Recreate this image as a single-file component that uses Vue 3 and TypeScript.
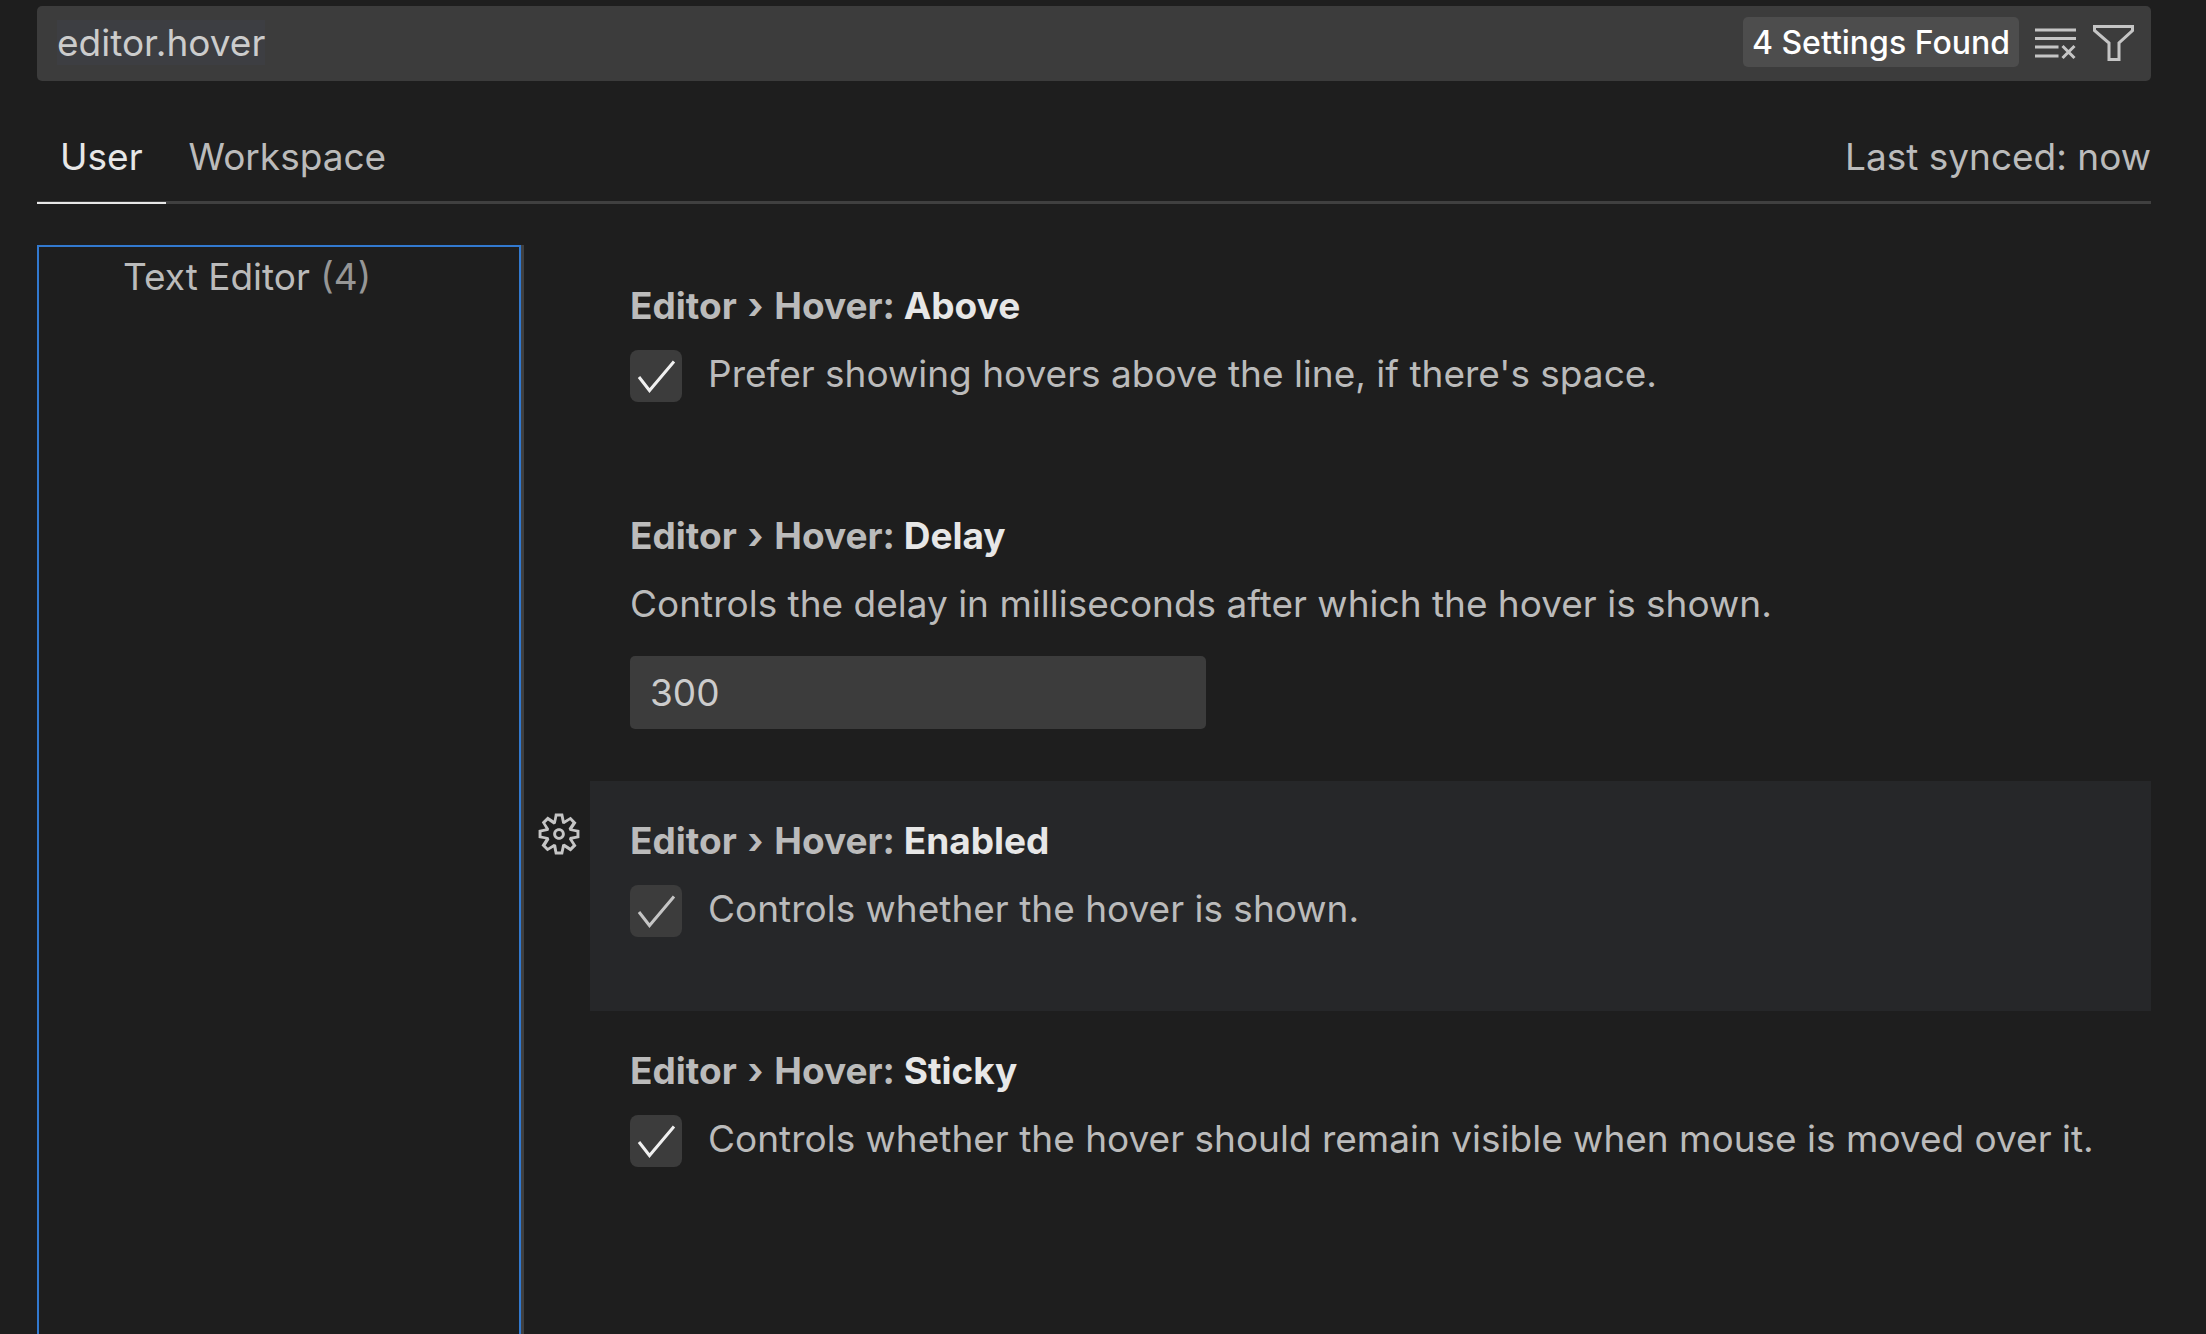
<script setup lang="ts">
import { onMounted, ref } from 'vue'

interface Setting {
  id: string
  name: string
  description: string
  kind: 'toggle' | 'number'
}

const settings: Setting[] = [
  { id: 'above', name: 'Above', description: "Prefer showing hovers above the line, if there's space.", kind: 'toggle' },
  { id: 'delay', name: 'Delay', description: 'Controls the delay in milliseconds after which the hover is shown.', kind: 'number' },
  { id: 'enabled', name: 'Enabled', description: 'Controls whether the hover is shown.', kind: 'toggle' },
  { id: 'sticky', name: 'Sticky', description: 'Controls whether the hover should remain visible when mouse is moved over it.', kind: 'toggle' },
]

const query = ref('editor.hover')
const delay = ref('300')
const toggles = ref<Record<string, boolean>>({ above: true, enabled: true, sticky: true })
const focusedId = ref('enabled')
const activeTab = ref('User')
const searchBox = ref<HTMLInputElement | null>(null)

onMounted(() => {
  searchBox.value?.select()
})
</script>

<template>
  <main class="settings-editor">
    <div class="search">
      <input ref="searchBox" v-model="query" class="search-input" type="text" aria-label="Search settings" spellcheck="false" />
      <span class="badge">4 Settings Found</span>
      <button class="icon-button" type="button" aria-label="Clear settings search">
        <svg viewBox="0 0 42 42" fill="none" stroke="currentColor" stroke-width="3">
          <path d="M0 9H41M0 17.500H41M0 26H23.500M0 35H23.500M27.500 25L39.500 37M39.500 25L27.500 37" />
        </svg>
      </button>
      <button class="icon-button" type="button" aria-label="Filter settings">
        <svg viewBox="0 0 42 42" fill="none" stroke="currentColor" stroke-width="3">
          <path d="M1.500 5.500H39.500V9.500L26 22V38.500H16V22L1.500 9.500Z" />
        </svg>
      </button>
    </div>

    <header class="tabs">
      <button
        v-for="tab in ['User', 'Workspace']"
        :key="tab"
        type="button"
        class="tab"
        :class="{ active: tab === activeTab }"
        @click="activeTab = tab"
      >{{ tab }}</button>
      <span class="sync">Last synced: now</span>
    </header>

    <div class="body">
      <nav class="toc" aria-label="Settings groups">
        <a href="#text-editor">Text Editor <span class="count">(4)</span></a>
      </nav>
      <section id="text-editor" class="list">
        <article
          v-for="item in settings"
          :key="item.id"
          class="row"
          :class="{ focused: item.id === focusedId }"
        >
          <div class="gutter">
            <button v-if="item.id === focusedId" class="icon-button" type="button" aria-label="More actions">
              <svg viewBox="0.8 0.8 14.4 14.4" fill="currentColor">
                <path fill-rule="evenodd" clip-rule="evenodd" d="M9.1 4.4L8.6 2H7.4l-.5 2.400-.7.3-2-1.300-.9.8 1.300 2-.2.700-2.400.500v1.200l2.400.500.3.8-1.300 2 .8.800 2-1.300.8.300.4 2.300h1.200l.5-2.400.8-.3 2 1.300.8-.8-1.300-2 .3-.8 2.300-.4V7.400l-2.400-.5-.3-.8 1.300-2-.8-.8-2 1.300-.7-.2zM9.400 1l.5 2.400L12 2.100l2 2-1.400 2.100 2.400.4v2.800l-2.400.5L14 12l-2 2-2.100-1.400-.5 2.400H6.600l-.5-2.400L4 13.900l-2-2 1.400-2.100L1 9.400V6.600l2.400-.5L2.100 4l2-2 2.100 1.400.4-2.400h2.800zm.6 7c0 1.100-.9 2-2 2s-2-.9-2-2 .9-2 2-2 2 .9 2 2zM8 9c.6 0 1-.4 1-1s-.4-1-1-1-1 .4-1 1 .4 1 1 1z" />
              </svg>
            </button>
          </div>
          <div class="content">
            <h2 class="title">Editor <span class="separator">›</span> Hover: <span class="name">{{ item.name }}</span></h2>
            <label v-if="item.kind === 'toggle'" class="toggle">
              <span class="box">
                <input v-model="toggles[item.id]" type="checkbox" />
                <svg v-if="toggles[item.id]" viewBox="0 0 52 52" fill="none" stroke="currentColor" stroke-width="3">
                  <path d="M9 27L19.500 40.500L44 11.500" />
                </svg>
              </span>
              <span>{{ item.description }}</span>
            </label>
            <template v-else>
              <label class="description" :for="item.id">{{ item.description }}</label>
              <input :id="item.id" v-model="delay" class="number" type="text" inputmode="numeric" />
            </template>
          </div>
        </article>
      </section>
    </div>
  </main>
</template>

<style>
body {
  background: #1e1e1e;
}
</style>

<style scoped>
.settings-editor {
  display: flex;
  flex-direction: column;
  box-sizing: border-box;
  min-height: 100vh;
  padding: 6px 55px 0 37px;
  background: #1e1e1e;
  color: #bbbbbb;
  font-family: Inter, "Liberation Sans", sans-serif;
  font-size: 37px;
  line-height: 48px;
}

button,
input {
  font: inherit;
  color: inherit;
}

button {
  padding: 0;
  border: 0;
  background: none;
}

input {
  box-sizing: border-box;
  min-width: 0;
  border: 0;
  outline: 0;
}

.search {
  display: flex;
  align-items: center;
  padding: 0 16px 3px 0;
  border-radius: 5px;
  background: #3c3c3c;
  color: #cccccc;
}

.search-input {
  flex: 1;
  height: 72px;
  padding: 0 20px;
  background: none;
}

.search-input::selection {
  background: #3d3e42;
  color: #cccccc;
}

.badge {
  margin-right: 16px;
  padding: 2px 9px 0;
  border-radius: 5px;
  background: #4d4d4d;
  color: #ffffff;
  font-size: 32px;
  font-weight: 500;
  line-height: 48px;
}

.icon-button {
  display: block;
  width: 42px;
  height: 42px;
  color: #c5c5c5;
}

.icon-button svg {
  display: block;
}

.search .icon-button + .icon-button {
  margin-left: 16px;
}

.tabs {
  display: flex;
  height: 72px;
  margin-top: 48px;
  border-bottom: 3px solid #404040;
}

.tab {
  height: 75px;
  padding: 0 23px 18px;
  border-bottom: 2px solid transparent;
}

.tab.active {
  border-bottom-color: #e7e7e7;
  color: #e7e7e7;
}

.sync {
  margin-left: auto;
  line-height: 56px;
}

.body {
  display: flex;
  flex: 1;
  margin-top: 41px;
}

.toc {
  box-sizing: border-box;
  width: 484px;
  border: 2px solid #3279cf;
  border-bottom: 0;
  box-shadow: 3px 0 0 #404040;
}

.toc a {
  display: block;
  padding: 6px 0 0 84px;
  color: inherit;
  text-decoration: none;
}

.count {
  color: #969696;
}

.list {
  flex: 1;
  min-width: 0;
  padding-top: 1px;
}

.row {
  display: flex;
}

.gutter {
  width: 69px;
  padding-top: 32px;
}

.gutter .icon-button {
  margin-left: 17px;
}

.content {
  flex: 1;
  padding: 36px 40px 52px;
}

.focused .content {
  background: #262729;
}

.title {
  margin: 0 0 20px;
  font-size: 37px;
  font-weight: 700;
  line-height: 48px;
}

.separator {
  margin: 0 2px;
}

.name {
  color: #e7e7e7;
}

.toggle {
  display: flex;
  gap: 26px;
  height: 74px;
}

.box {
  position: relative;
  width: 52px;
  height: 52px;
  color: #f0f0f0;
}

.focused .box {
  color: #c5c5c5;
}

.box input {
  display: block;
  width: 52px;
  height: 52px;
  margin: 0;
  border-radius: 8px;
  appearance: none;
  background: #3c3c3c;
}

.box svg {
  position: absolute;
  inset: 0;
  pointer-events: none;
}

.description {
  display: block;
  margin-bottom: 28px;
}

.number {
  display: block;
  width: 576px;
  height: 73px;
  padding: 0 20px;
  border-radius: 5px;
  background: #3c3c3c;
  color: #cccccc;
}
</style>
